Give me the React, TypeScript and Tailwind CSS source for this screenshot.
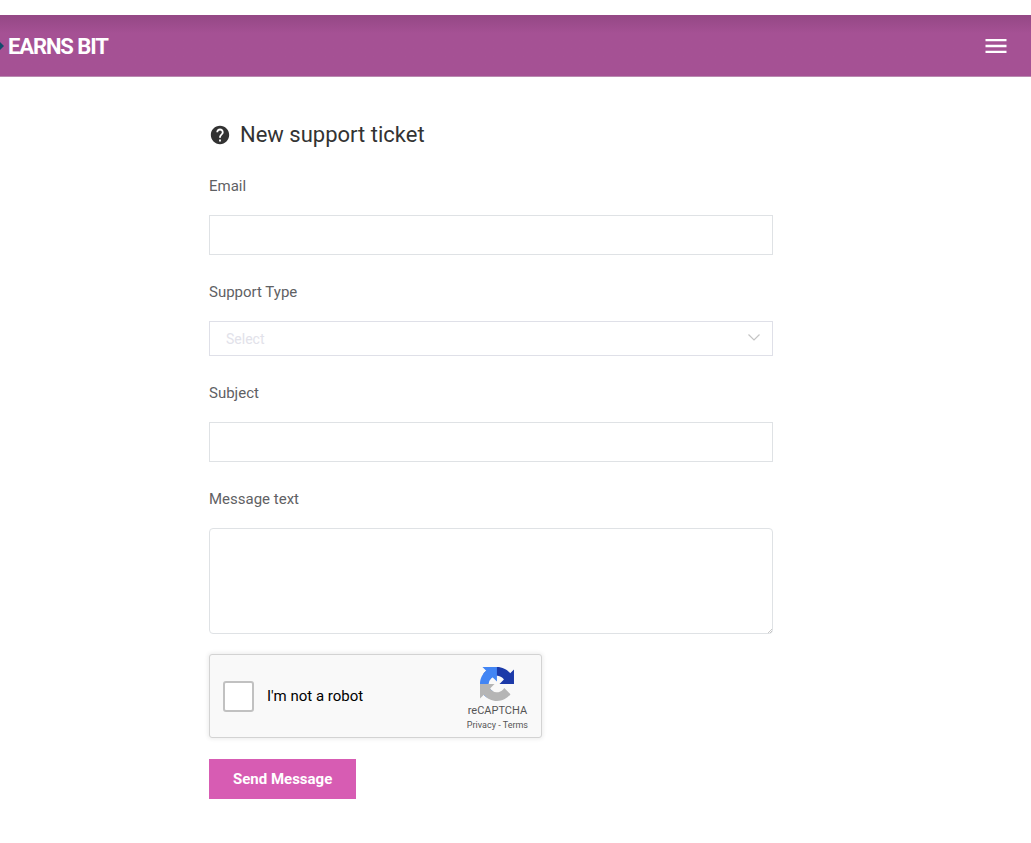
import type { ReactNode } from "react";
import { MdHelp, MdMenu } from "react-icons/md";

const inputClass = "block h-10 w-full border border-[#dfe2e5] bg-white px-4 text-[15px] text-[#333] focus:outline-none";

type FieldProps = {
  id: string;
  label: string;
  children: ReactNode;
};

function Field({ id, label, children }: FieldProps) {
  return (
    <div>
      <label htmlFor={id} className="mb-[19px] block text-[15px] leading-5 text-[#5f6164]">
        {label}
      </label>
      {children}
    </div>
  );
}

function Header() {
  return (
    <header className="mt-[15px] flex h-[62px] items-center justify-between border-b border-[#b98bb0] bg-linear-to-b from-[#944885] to-[#a55194] to-30% pr-[21px]">
      <a href="#" className="flex items-center gap-1 pt-px text-[22px] font-bold tracking-tighter text-white">
        <svg viewBox="0 0 4 8" className="h-2 w-1" aria-hidden="true">
          <path d="M0 0l4 4-4 4z" fill="#124a6b" />
        </svg>
        EARNS BIT
      </a>

      <button type="button" aria-label="Open menu" className="text-white">
        <MdMenu size={28} />
      </button>
    </header>
  );
}

function RecaptchaLogo() {
  return (
    <svg viewBox="0 0 64 64" className="h-[34px] w-[34px]" aria-hidden="true">
      <path
        fill="#1c3aa9"
        d="M64 31.955l-.033-1.37V4.687l-7.16 7.16C50.948 4.674 42.033.093 32.05.093c-10.4 0-19.622 4.96-25.458 12.64l11.736 11.86a15.55 15.55 0 0 1 4.754-5.334c2.05-1.6 4.952-2.906 8.968-2.906.485 0 .86.057 1.135.163 4.976.393 9.288 3.14 11.828 7.124l-8.307 8.307L64 31.953"
      />
      <path
        fill="#4285f4"
        d="M31.862.094l-1.37.033H4.594l7.16 7.16C4.58 13.147 0 22.06 0 32.046c0 10.4 4.96 19.622 12.64 25.458L24.5 45.768a15.55 15.55 0 0 1-5.334-4.754c-1.6-2.05-2.906-4.952-2.906-8.968 0-.485.057-.86.163-1.135.393-4.976 3.14-9.288 7.124-11.828l8.307 8.307L31.86.095"
      />
      <path
        fill="#b5b5b5"
        d="M.001 32.045l.033 1.37v25.898l7.16-7.16c5.86 7.173 14.774 11.754 24.76 11.754 10.4 0 19.622-4.96 25.458-12.64l-11.736-11.86a15.55 15.55 0 0 1-4.754 5.334c-2.05 1.6-4.952 2.906-8.968 2.906-.485 0-.86-.057-1.135-.163-4.976-.393-9.288-3.14-11.828-7.124l8.307-8.307c-10.522.04-22.4.066-27.295-.005"
      />
    </svg>
  );
}

function Recaptcha() {
  return (
    <div className="flex h-[84px] max-w-[333px] items-center justify-between rounded-[3px] border border-[#d3d3d3] bg-[#f9f9f9] px-[13px] shadow-[0_0_4px_1px_rgba(0,0,0,0.08)]">
      <label className="flex items-center gap-[13px] text-[15px] text-black">
        <input
          type="checkbox"
          className="size-[31px] appearance-none rounded-[3px] border-2 border-[#c1c1c1] bg-white checked:bg-[#4285f4]"
        />
        I&apos;m not a robot
      </label>

      <div className="flex flex-col items-center pt-1.5 text-[#555]">
        <RecaptchaLogo />
        <span className="mt-0.5 text-[11px] leading-4">reCAPTCHA</span>
        <div className="text-[9px] leading-3">
          <a href="#">Privacy</a> - <a href="#">Terms</a>
        </div>
      </div>
    </div>
  );
}

export default function App() {
  return (
    <div className="bg-white font-['Roboto',sans-serif]">
      <Header />

      <main className="mx-auto w-full max-w-[1031px] px-4 pt-11 pb-11 md:pr-[258px] md:pl-[209px]">
        <h1 className="mb-[27px] flex items-center gap-[9px] text-[22px] leading-7 text-[#333]">
          <MdHelp size={22} />
          New support ticket
        </h1>

        <form onSubmit={(e) => e.preventDefault()}>
          <div className="mb-5 space-y-[27px]">
            <Field id="email" label="Email">
              <input id="email" name="email" type="email" className={inputClass} />
            </Field>

            <Field id="support-type" label="Support Type">
              <div className="relative">
                <select
                  id="support-type"
                  name="supportType"
                  defaultValue=""
                  className="block h-[35px] w-full appearance-none border border-[#dfe0e8] bg-white pr-10 pl-4 text-sm text-[#e2e2ea] focus:outline-none"
                >
                  <option value="">Select</option>
                  <option value="account">Account</option>
                  <option value="payment">Payment</option>
                </select>
                <svg
                  viewBox="0 0 12 7"
                  className="pointer-events-none absolute top-[13px] right-[13px] h-[7px] w-3"
                  aria-hidden="true"
                >
                  <path d="M.5.5L6 6L11.500.5" fill="none" stroke="#c4c4c4" strokeWidth="1.2" />
                </svg>
              </div>
            </Field>

            <Field id="subject" label="Subject">
              <input id="subject" name="subject" type="text" className={inputClass} />
            </Field>

            <Field id="message" label="Message text">
              <div className="relative">
                <textarea
                  id="message"
                  name="message"
                  className="block h-[106px] w-full resize-none rounded-[4px] border border-[#dfe2e5] bg-white px-4 py-2 text-[15px] text-[#333] focus:outline-none"
                />
                <svg
                  viewBox="0 0 4 4"
                  className="pointer-events-none absolute right-px bottom-px size-1"
                  aria-hidden="true"
                >
                  <path d="M0 4L4 0M2 4L4 2" stroke="#a8a8a8" strokeWidth=".6" />
                </svg>
              </div>
            </Field>
          </div>

          <Recaptcha />

          <button type="submit" className="mt-[21px] h-10 bg-[#d75cb3] px-6 text-[15px] font-bold text-white">
            Send Message
          </button>
        </form>
      </main>
    </div>
  );
}
